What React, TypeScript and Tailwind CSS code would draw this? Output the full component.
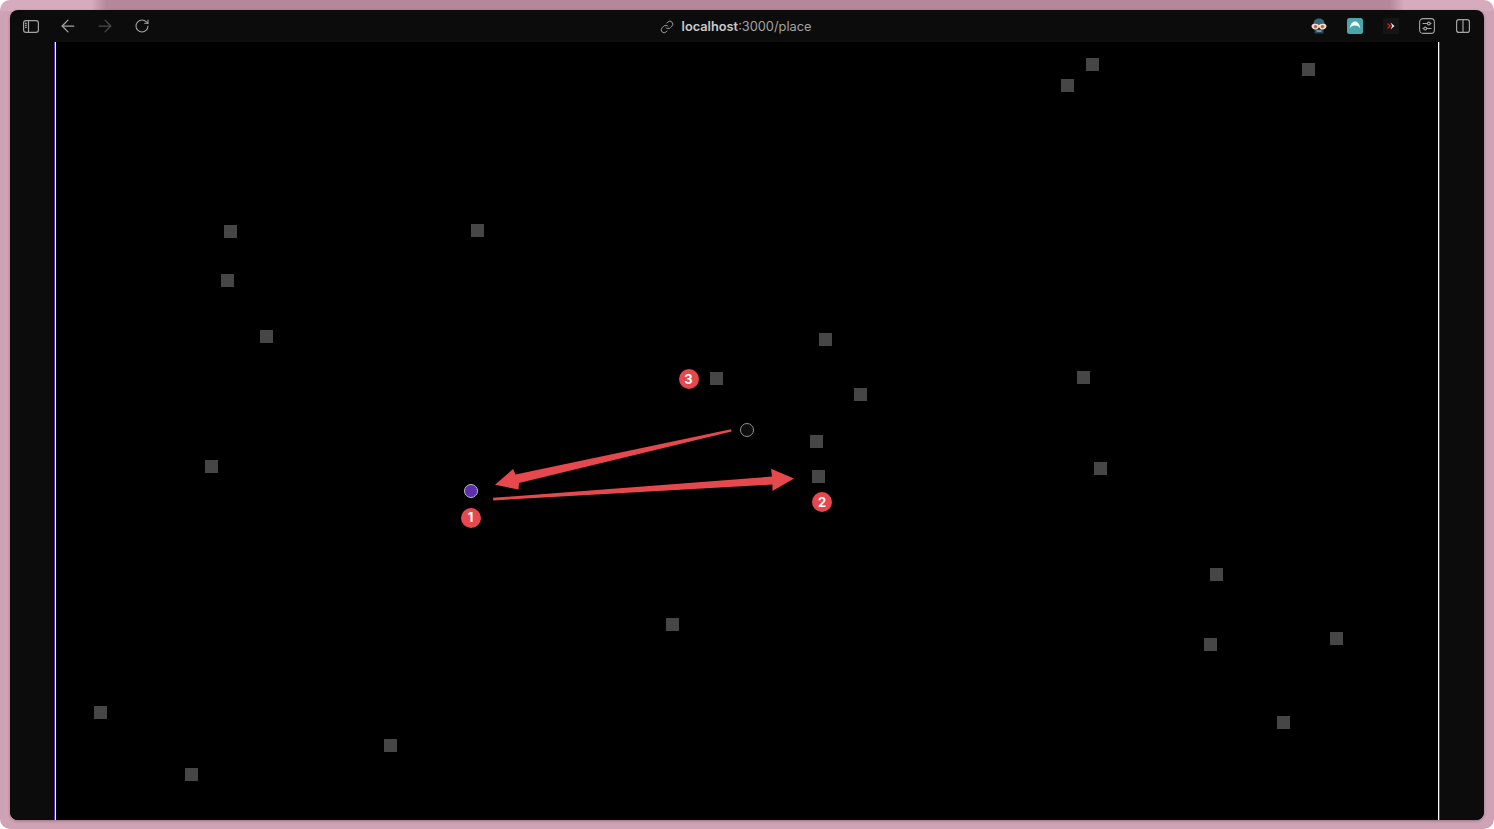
import { ArrowLeft, ArrowRight, Link, RotateCw } from "lucide-react";

const squares: [number, number][] = [
  [1092, 64], [1067, 85], [1308, 69], [230, 231], [477, 230], [227, 280], [266, 336], [825, 339],
  [716, 378], [860, 394], [1083, 377], [816, 441], [818, 476], [211, 466], [1100, 468], [1216, 574],
  [672, 624], [1210, 644], [1336, 638], [100, 712], [1283, 722], [390, 745], [191, 774],
];
const badges: [number, number, string][] = [
  [470.5, 517.5, "1"], [822, 502, "2"], [688.5, 379, "3"],
];
const OX = 56;
const OY = 42;

function Slot({ children }: { children: React.ReactNode }) {
  return <div className="flex h-5 w-5 items-center justify-center">{children}</div>;
}

function SidebarIcon() {
  return (
    <svg width="16" height="13" viewBox="0 0 16 13" fill="none" stroke="#a3a3a3" strokeWidth="1.2">
      <rect x="0.6" y="0.6" width="14.8" height="11.8" rx="2.4" />
      <path d="M5.5 0.6V12.4" />
      <path d="M2 3.3H3.8M2 5.3H3.8M2 7.3H3.8" />
    </svg>
  );
}

function SplitIcon() {
  return (
    <svg width="14" height="14" viewBox="0 0 14 14" fill="none" stroke="#a3a3a3" strokeWidth="1.2">
      <rect x="0.6" y="0.6" width="12.8" height="12.8" rx="2.2" />
      <path d="M7 0.6V13.4" />
    </svg>
  );
}

function TogglesIcon() {
  return (
    <svg width="16" height="16" viewBox="0 0 16 16" fill="none" stroke="#a3a3a3" strokeWidth="1.1">
      <rect x="0.6" y="0.6" width="14.8" height="14.8" rx="3.4" />
      <path d="M3.5 5.5H12.5M3.5 10.5H12.5" />
      <circle cx="9.8" cy="5.5" r="1.4" fill="#0b0b0b" />
      <circle cx="6.2" cy="10.5" r="1.4" fill="#0b0b0b" />
    </svg>
  );
}

function AvatarIcon() {
  return (
    <svg width="16" height="16" viewBox="0 0 16 16" className="shrink-0">
      <path d="M2.5 6C2.5 2 5 0.5 8 0.5C11 0.5 13.5 2 13.5 6V8H2.5Z" fill="#35687a" />
      <rect x="3.5" y="11" width="9" height="4.5" fill="#23495a" />
      <rect x="5.5" y="12.5" width="5" height="1" fill="#c6dde2" />
      <path d="M0.5 8C0.5 6.4 2 5.8 4.5 5.8C7 5.8 7.2 6.8 8 7.2C8.8 6.8 9 5.8 11.5 5.8C14 5.8 15.5 6.4 15.5 8C15.5 10 13.6 11.6 11.7 11.6C10 11.6 8.8 10.4 8 9.2C7.2 10.4 6 11.6 4.3 11.6C2.4 11.6 0.5 10 0.5 8Z" fill="#ecdcd4" />
      <circle cx="4.5" cy="8.6" r="1.7" fill="#cf5a36" />
      <circle cx="11.5" cy="8.6" r="1.7" fill="#cf5a36" />
    </svg>
  );
}

function TealIcon() {
  return (
    <svg width="16" height="16" viewBox="0 0 16 16">
      <rect width="16" height="16" rx="2.5" fill="#4aa5ad" />
      <path d="M2.6 10.6C3.4 6.2 5.4 3.6 8 3.6C10.6 3.6 12.6 6.2 13.4 10.6C12.2 8.8 10.4 7.6 8 7.6C5.6 7.6 3.8 8.8 2.6 10.6Z" fill="#f1fbfb" />
    </svg>
  );
}

function ChevronIcon() {
  return (
    <svg width="16" height="16" viewBox="0 0 16 16">
      <rect width="16" height="16" rx="1" fill="#151515" />
      <path d="M7.5 4.5L11.5 8L7.5 11.5L9 8Z" fill="#e5e5e5" />
      <path d="M4.5 4.8L8.2 8L4.5 11.2L4.5 9.6L6.2 8L4.5 6.4Z" fill="#e01e26" />
    </svg>
  );
}

export default function App() {
  return (
    <div className="h-[829px] w-[1494px] overflow-hidden bg-white">
      <div className="h-full w-full rounded-[10px] bg-[#cfa3b5] bg-[linear-gradient(90deg,#d6abbd_0px,#d6abbd_92px,#b5879a_106px,#b5879a_1390px,#d6abbd_1404px,#d6abbd_1494px)] bg-[length:100%_11px] bg-no-repeat p-[10px] pb-[9px]">
        <div className="flex h-full w-full flex-col overflow-hidden rounded-lg bg-[#0c0c0c] shadow-[0_1px_3px_rgba(90,50,70,0.45)] [font-family:Inter,'Liberation_Sans',sans-serif]">
          <header className="flex h-8 flex-none items-center justify-between px-[11px]">
            <div className="flex items-center gap-[17px]">
              <Slot><SidebarIcon /></Slot>
              <Slot><ArrowLeft size={20} strokeWidth={1.5} color="#a3a3a3" /></Slot>
              <Slot><ArrowRight size={20} strokeWidth={1.5} color="#4a4a4a" /></Slot>
              <Slot><RotateCw size={16} strokeWidth={1.6} color="#a3a3a3" /></Slot>
            </div>
            <div className="ml-[10px] mt-[1px] flex items-center gap-[8px] text-[12.8px] leading-4 text-[#a3a3a3]">
              <Link size={14} strokeWidth={1.6} color="#a3a3a3" />
              <span>
                <span className="font-semibold text-[#c9c9c9]">localhost</span>:3000/place
              </span>
            </div>
            <div className="flex items-center gap-4">
              <Slot><AvatarIcon /></Slot>
              <Slot><TealIcon /></Slot>
              <Slot><ChevronIcon /></Slot>
              <Slot><TogglesIcon /></Slot>
              <Slot><SplitIcon /></Slot>
            </div>
          </header>
          <main className="flex min-h-0 flex-1">
            <div className="w-11 flex-none bg-[#0c0c0c]" />
            <div className="w-px flex-none bg-[#5a2fc0]" />
            <div className="w-px flex-none bg-white" />
            <div className="relative flex-1 bg-black">
              {squares.map(([x, y]) => (
                <div
                  key={`${x}-${y}`}
                  className="absolute h-[13px] w-[13px] bg-[#464646]"
                  style={{ left: x - 6 - OX, top: y - 6 - OY }}
                />
              ))}
              <svg className="absolute left-0 top-0 h-full w-full" viewBox={`${OX} ${OY} 1382 778`}>
                <path
                  d="M731 429.3L731.6 431.4L519 483L518.5 489.5L495 484.8L513 469L515.5 474.5Z"
                  fill="#e5484d"
                />
                <path
                  d="M493 497.8L772 476.6L771 468.8L794 478.6L772.5 491L772.4 484.6L493.4 500.4Z"
                  fill="#e5484d"
                />
              </svg>
              <div
                className="absolute h-[14px] w-[14px] rounded-full border border-[#b9b9b9] bg-[#5b2fae]"
                style={{ left: 471 - 7 - OX, top: 491 - 7 - OY }}
              />
              <div
                className="absolute h-[14px] w-[14px] rounded-full border border-[#8f8f8f] bg-[#0d0d0d]"
                style={{ left: 747 - 7 - OX, top: 430 - 7 - OY }}
              />
              {badges.map(([x, y, n]) => (
                <div
                  key={n}
                  className="absolute flex h-5 w-5 items-center justify-center rounded-full bg-[#e5484d] text-[13px] font-bold leading-none text-white"
                  style={{ left: x - 10 - OX, top: y - 10 - OY }}
                >
                  {n}
                </div>
              ))}
            </div>
            <div className="w-px flex-none bg-white" />
            <div className="w-px flex-none bg-[#5a2fc0]" />
            <div className="w-11 flex-none bg-[#0c0c0c]" />
          </main>
        </div>
      </div>
    </div>
  );
}
